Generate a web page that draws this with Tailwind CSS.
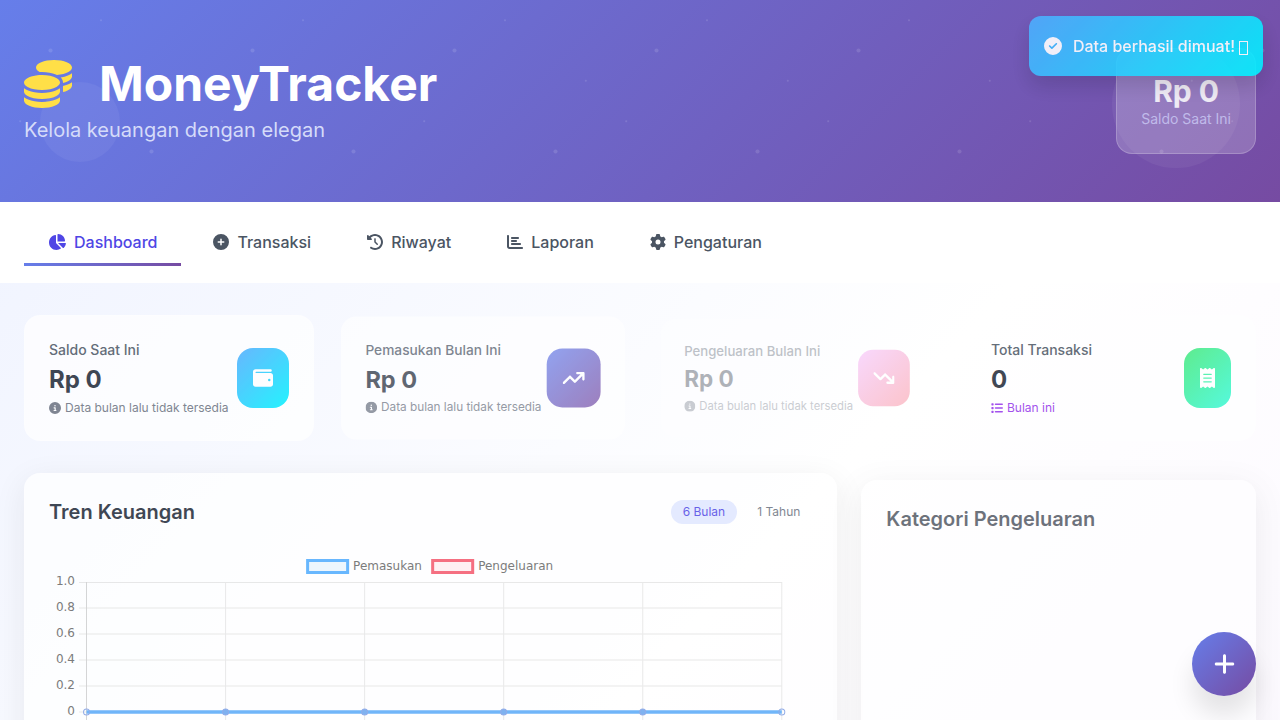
<!DOCTYPE html>
<html lang="id">
<head>
<meta charset="utf-8">
<meta name="viewport" content="width=device-width, initial-scale=1">
<title>MoneyTracker</title>
<script src="https://cdn.jsdelivr.net/npm/@tailwindcss/browser@4"></script>
</head>
<body class="font-['Inter',sans-serif] text-[#1f2937]">
<svg class="hidden" aria-hidden="true">
  <symbol id="coins" viewBox="0 0 512 512"><path d="M512 80c0 18-14.3 34.6-38.4 48c-29.1 16.1-72.5 27.5-122.3 30.9c-3.7-1.8-7.4-3.5-11.3-5C300.6 137.4 248.2 128 192 128c-8.3 0-16.4 .2-24.5 .6l-1.1-.6C142.3 114.6 128 98 128 80c0-44.2 86-80 192-80S512 35.8 512 80zM160.7 161.1c10.2-.7 20.7-1.1 31.3-1.1c62.2 0 117.4 12.3 152.5 31.4C369.3 204.9 384 221.7 384 240c0 4-.7 7.9-2.1 11.7c-4.6 13.2-17 25.3-35 35.5c-.4 .3-.9 .5-1.3 .7c-35 19.4-90.8 32-153.6 32c-59.6 0-112.9-11.3-148.2-29.1c-1.9-.9-3.7-1.9-5.5-2.9C14.3 274.6 0 258 0 240c0-34.8 53.4-64.5 128-75.4c10.5-1.5 21.4-2.7 32.7-3.5zM416 240c0-21.9-10.6-39.9-24.1-53.4c28.3-4.4 54.2-11.4 76.2-20.5c16.3-6.8 31.5-15.2 43.9-25.5V176c0 19.3-16.5 37.1-43.8 50.9c-14.6 7.4-32.4 13.7-52.4 18.5c.1-1.8 .2-3.5 .2-5.3zm-32 96c0 18-14.3 34.6-38.4 48c-1.8 1-3.6 1.9-5.5 2.9C304.9 404.7 251.6 416 192 416c-62.8 0-118.6-12.6-153.6-32C14.3 370.6 0 354 0 336V300.6c12.5 10.3 27.6 18.7 43.9 25.5C83.4 342.6 135.8 352 192 352s108.6-9.4 148.1-25.9c7.8-3.2 15.3-6.9 22.4-10.9c6.1-3.4 11.8-7.2 17.2-11.2c1.5-1.1 2.9-2.3 4.3-3.4V336zm32 0V278.1c19-4.2 36.5-9.5 52.1-16c16.3-6.8 31.5-15.2 43.9-25.5V272c0 10.5-5 21-14.9 30.9c-16.3 16.3-45 29.7-81.3 38.4c.1-1.7 .2-3.5 .2-5.3zM192 448c56.2 0 108.6-9.4 148.1-25.9c16.3-6.8 31.5-15.2 43.9-25.5V432c0 44.2-86 80-192 80S0 476.2 0 432V396.6c12.5 10.3 27.6 18.7 43.9 25.5C83.4 438.6 135.8 448 192 448z"/></symbol>
  <symbol id="check" viewBox="0 0 512 512"><path d="M256 512A256 256 0 1 0 256 0a256 256 0 1 0 0 512zM369 209L241 337c-9.4 9.4-24.6 9.4-33.9 0l-64-64c-9.4-9.4-9.4-24.6 0-33.9s24.6-9.4 33.9 0l47 47L335 175c9.4-9.4 24.6-9.4 33.9 0s9.4 24.6 0 33.9z"/></symbol>
  <symbol id="pie" viewBox="0 0 576 512"><path d="M304 240V16.6c0-9 7-16.6 16-16.6C443.7 0 544 100.3 544 224c0 9-7.6 16-16.6 16H304zM32 272C32 150.7 122.1 50.3 239 34.3c9.2-1.3 17 6.1 17 15.4V288L412.5 444.5c6.7 6.7 6.2 17.7-1.5 23.1C371.8 495.6 323.8 512 272 512C139.5 512 32 404.6 32 272zm526.4 16c9.3 0 16.6 7.8 15.4 17c-7.7 55.9-34.6 105.6-73.9 142.3c-6 5.6-15.4 5.2-21.2-.7L320 288H558.4z"/></symbol>
  <symbol id="circle-plus" viewBox="0 0 512 512"><path d="M256 512A256 256 0 1 0 256 0a256 256 0 1 0 0 512zM232 344V280H168c-13.3 0-24-10.7-24-24s10.7-24 24-24h64V168c0-13.3 10.7-24 24-24s24 10.7 24 24v64h64c13.3 0 24 10.7 24 24s-10.7 24-24 24H280v64c0 13.3-10.7 24-24 24s-24-10.7-24-24z"/></symbol>
  <symbol id="history" viewBox="0 0 512 512"><path d="M75 75L41 41C25.9 25.9 0 36.6 0 57.9V168c0 13.3 10.7 24 24 24H134.1c21.4 0 32.1-25.9 17-41l-30.8-30.8C155 85.5 203 64 256 64c106 0 192 86 192 192s-86 192-192 192c-40.8 0-78.6-12.7-109.7-34.4c-14.5-10.1-34.4-6.6-44.6 7.9s-6.6 34.4 7.9 44.6C151.2 495 201.7 512 256 512c141.4 0 256-114.6 256-256S397.4 0 256 0C185.3 0 121.3 28.7 75 75zm181 53c-13.3 0-24 10.7-24 24V256c0 6.4 2.5 12.5 7 17l72 72c9.4 9.4 24.6 9.4 33.9 0s9.4-24.6 0-33.9l-65-65V152c0-13.3-10.7-24-24-24z"/></symbol>
  <symbol id="bars" viewBox="0 0 512 512"><path d="M32 32c17.7 0 32 14.3 32 32V400c0 8.8 7.2 16 16 16H480c17.7 0 32 14.3 32 32s-14.3 32-32 32H80c-44.2 0-80-35.8-80-80V64C0 46.3 14.3 32 32 32zm96 96c0-17.7 14.3-32 32-32l192 0c17.7 0 32 14.3 32 32s-14.3 32-32 32l-192 0c-17.7 0-32-14.3-32-32zm32 64H288c17.7 0 32 14.3 32 32s-14.3 32-32 32H160c-17.7 0-32-14.3-32-32s14.3-32 32-32zm0 96H416c17.7 0 32 14.3 32 32s-14.3 32-32 32H160c-17.7 0-32-14.3-32-32s14.3-32 32-32z"/></symbol>
  <symbol id="gear" viewBox="0 0 512 512"><path d="M495.9 166.6c3.2 8.7 .5 18.4-6.4 24.6l-43.3 39.4c1.1 8.3 1.7 16.8 1.7 25.4s-.6 17.1-1.7 25.4l43.3 39.4c6.9 6.2 9.6 15.9 6.4 24.6c-4.4 11.9-9.7 23.3-15.8 34.3l-4.7 8.1c-6.6 11-14 21.4-22.1 31.2c-5.9 7.2-15.7 9.6-24.5 6.8l-55.7-17.7c-13.4 10.3-28.2 18.9-44 25.4l-12.5 57.1c-2 9.1-9 16.3-18.2 17.8c-13.8 2.3-28 3.5-42.5 3.5s-28.7-1.2-42.5-3.5c-9.2-1.5-16.2-8.7-18.2-17.8l-12.5-57.1c-15.8-6.5-30.6-15.1-44-25.4L83.1 425.9c-8.8 2.8-18.6 .3-24.5-6.8c-8.1-9.8-15.5-20.2-22.1-31.2l-4.7-8.1c-6.1-11-11.4-22.4-15.8-34.3c-3.2-8.7-.5-18.4 6.4-24.6l43.3-39.4C64.6 273.1 64 264.6 64 256s.6-17.1 1.7-25.4L22.4 191.2c-6.9-6.2-9.6-15.9-6.4-24.6c4.4-11.9 9.7-23.3 15.8-34.3l4.7-8.1c6.6-11 14-21.4 22.1-31.2c5.9-7.2 15.7-9.6 24.5-6.8l55.7 17.7c13.4-10.3 28.2-18.9 44-25.4l12.5-57.1c2-9.1 9-16.3 18.2-17.8C227.3 1.2 241.5 0 256 0s28.7 1.2 42.5 3.5c9.2 1.5 16.2 8.7 18.2 17.8l12.5 57.1c15.8 6.5 30.6 15.1 44 25.4l55.7-17.7c8.8-2.8 18.6-.3 24.5 6.8c8.1 9.8 15.5 20.2 22.1 31.2l4.7 8.1c6.1 11 11.4 22.4 15.8 34.3zM256 336a80 80 0 1 0 0-160 80 80 0 1 0 0 160z"/></symbol>
  <symbol id="info" viewBox="0 0 512 512"><path d="M256 512A256 256 0 1 0 256 0a256 256 0 1 0 0 512zM216 336h24V272H216c-13.3 0-24-10.7-24-24s10.7-24 24-24h48c13.3 0 24 10.7 24 24v88h8c13.3 0 24 10.7 24 24s-10.7 24-24 24H216c-13.3 0-24-10.7-24-24s10.7-24 24-24zm40-208a32 32 0 1 1 0 64 32 32 0 1 1 0-64z"/></symbol>
  <symbol id="wallet" viewBox="0 0 512 512"><path d="M64 32C28.7 32 0 60.7 0 96V416c0 35.3 28.7 64 64 64H448c35.3 0 64-28.7 64-64V192c0-35.3-28.7-64-64-64H80c-8.8 0-16-7.2-16-16s7.2-16 16-16H448c17.7 0 32-14.3 32-32s-14.3-32-32-32H64zM416 272a32 32 0 1 1 0 64 32 32 0 1 1 0-64z"/></symbol>
  <symbol id="trend-up" viewBox="0 0 576 512"><path d="M384 160c-17.7 0-32-14.3-32-32s14.3-32 32-32H544c17.7 0 32 14.3 32 32V288c0 17.7-14.3 32-32 32s-32-14.3-32-32V205.3L342.6 374.6c-12.5 12.5-32.8 12.5-45.3 0L192 269.3 54.6 406.6c-12.5 12.5-32.8 12.5-45.3 0s-12.5-32.8 0-45.3l160-160c12.5-12.5 32.8-12.5 45.3 0L320 306.7 466.7 160H384z"/></symbol>
  <symbol id="trend-down" viewBox="0 0 576 512"><path d="M384 352c-17.7 0-32 14.3-32 32s14.3 32 32 32H544c17.7 0 32-14.3 32-32V224c0-17.7-14.3-32-32-32s-32 14.3-32 32v82.7L342.6 137.4c-12.5-12.5-32.8-12.5-45.3 0L192 242.7 54.6 105.4c-12.5-12.5-32.8-12.5-45.3 0s-12.5 32.8 0 45.3l160 160c12.5 12.5 32.8 12.5 45.3 0L320 205.3 466.7 352H384z"/></symbol>
  <symbol id="receipt" viewBox="0 0 384 512"><path d="M14 2.2C22.5-1.7 32.5-.3 39.6 5.8L80 40.4 120.4 5.8c9-7.7 22.3-7.7 31.2 0L192 40.4 232.4 5.8c9-7.7 22.3-7.7 31.2 0L304 40.4 344.4 5.8c7.1-6.1 17.1-7.5 25.6-3.6s14 12.4 14 21.8V488c0 9.4-5.5 17.9-14 21.8s-18.5 2.5-25.6-3.6L304 471.6l-40.4 34.6c-9 7.7-22.3 7.7-31.2 0L192 471.6l-40.4 34.6c-9 7.7-22.3 7.7-31.2 0L80 471.6 39.6 506.2c-7.1 6.1-17.1 7.5-25.6 3.6S0 497.4 0 488V24C0 14.6 5.5 6.1 14 2.2zM96 144c-8.8 0-16 7.2-16 16s7.2 16 16 16H288c8.8 0 16-7.2 16-16s-7.2-16-16-16H96zM80 352c0 8.8 7.2 16 16 16H288c8.8 0 16-7.2 16-16s-7.2-16-16-16H96c-8.8 0-16 7.2-16 16zM96 240c-8.8 0-16 7.2-16 16s7.2 16 16 16H288c8.8 0 16-7.2 16-16s-7.2-16-16-16H96z"/></symbol>
  <symbol id="list" viewBox="0 0 512 512"><path d="M40 48C26.7 48 16 58.7 16 72v48c0 13.3 10.7 24 24 24H88c13.3 0 24-10.7 24-24V72c0-13.3-10.7-24-24-24H40zM192 64c-17.7 0-32 14.3-32 32s14.3 32 32 32H480c17.7 0 32-14.3 32-32s-14.3-32-32-32H192zm0 160c-17.7 0-32 14.3-32 32s14.3 32 32 32H480c17.7 0 32-14.3 32-32s-14.3-32-32-32H192zm0 160c-17.7 0-32 14.3-32 32s14.3 32 32 32H480c17.7 0 32-14.3 32-32s-14.3-32-32-32H192zM16 232v48c0 13.3 10.7 24 24 24H88c13.3 0 24-10.7 24-24V232c0-13.3-10.7-24-24-24H40c-13.3 0-24 10.7-24 24zM40 368c-13.3 0-24 10.7-24 24v48c0 13.3 10.7 24 24 24H88c13.3 0 24-10.7 24-24V392c0-13.3-10.7-24-24-24H40z"/></symbol>
  <symbol id="plus" viewBox="0 0 448 512"><path d="M256 80c0-17.7-14.3-32-32-32s-32 14.3-32 32V224H48c-17.7 0-32 14.3-32 32s14.3 32 32 32H192V432c0 17.7 14.3 32 32 32s32-14.3 32-32V288H400c17.7 0 32-14.3 32-32s-14.3-32-32-32H256V80z"/></symbol>
</svg>

<div class="min-h-screen bg-[linear-gradient(to_bottom_right,#eef2ff,#ffffff,#faf5ff)] bg-[length:100%_1366px]">
  <header class="relative overflow-hidden bg-[linear-gradient(135deg,#667eea_0%,#764ba2_100%)] px-6 py-12 text-white">
    <svg class="absolute inset-0 h-full w-full" aria-hidden="true">
      <defs>
        <pattern id="dots" width="202" height="202" patternUnits="userSpaceOnUse">
          <g transform="scale(2.02)" fill="#fff" fill-opacity="0.12">
            <circle cx="25" cy="25" r="1"/><circle cx="75" cy="75" r="1"/>
            <circle cx="50" cy="10" r=".5"/><circle cx="10" cy="60" r=".5"/><circle cx="90" cy="40" r=".5"/>
          </g>
        </pattern>
      </defs>
      <rect width="100%" height="100%" fill="url(#dots)"/>
    </svg>
    <div class="absolute top-10 right-10 size-32 rounded-full bg-white/5"></div>
    <div class="absolute bottom-10 left-10 size-20 rounded-full bg-white/5"></div>
    <div class="relative flex items-center justify-between">
      <div class="pt-px">
        <h1 class="mb-2 flex items-center gap-[27px] text-5xl leading-none font-bold">
          <svg class="size-12 fill-[#ffdf47]" aria-hidden="true"><use href="#coins"/></svg>MoneyTracker
        </h1>
        <p class="text-xl leading-7 text-[#d5dbf9]">Kelola keuangan dengan elegan</p>
      </div>
      <div class="rounded-2xl border border-white/20 bg-white/20 p-6 text-center">
        <p class="text-3xl leading-9 font-bold text-white/85">Rp 0</p>
        <p class="text-sm leading-5 text-[#c0baea]">Saldo Saat Ini</p>
      </div>
    </div>
  </header>

  <nav class="border-b border-white bg-white px-6 py-4">
    <div class="flex gap-2 font-medium text-[#4b5563]">
      <button type="button" class="relative flex h-12 items-center gap-2 px-6 text-[#4f46e5]"><svg class="h-4 w-[18px] fill-current" aria-hidden="true"><use href="#pie"/></svg>Dashboard<span class="absolute inset-x-0 bottom-0 h-[3px] bg-[linear-gradient(90deg,#667eea,#764ba2)]"></span></button>
      <button type="button" class="flex h-12 items-center gap-2 px-6"><svg class="size-4 fill-current" aria-hidden="true"><use href="#circle-plus"/></svg>Transaksi</button>
      <button type="button" class="flex h-12 items-center gap-2 px-6"><svg class="size-4 fill-current" aria-hidden="true"><use href="#history"/></svg>Riwayat</button>
      <button type="button" class="flex h-12 items-center gap-2 px-6"><svg class="size-4 fill-current" aria-hidden="true"><use href="#bars"/></svg>Laporan</button>
      <button type="button" class="flex h-12 items-center gap-2 px-6"><svg class="size-4 fill-current" aria-hidden="true"><use href="#gear"/></svg>Pengaturan</button>
    </div>
  </nav>

  <main class="px-6 py-8">
    <section class="mb-8 grid grid-cols-4 gap-6">
      <div class="flex items-center justify-between rounded-2xl border border-white/20 bg-white/90 p-6 opacity-85">
        <div class="flex flex-col gap-1">
          <p class="text-sm leading-5 font-medium text-[#4b5563]">Saldo Saat Ini</p>
          <p class="text-2xl leading-8 font-bold">Rp 0</p>
          <p class="flex items-center gap-1 text-xs leading-4 whitespace-nowrap text-[#6b7280]"><svg class="size-3 fill-current" aria-hidden="true"><use href="#info"/></svg>Data bulan lalu tidak tersedia</p>
        </div>
        <div class="rounded-2xl bg-[linear-gradient(135deg,#4facfe,#00f2fe)] px-4 py-5"><svg class="size-5 fill-white" aria-hidden="true"><use href="#wallet"/></svg></div>
      </div>
      <div class="flex scale-98 items-center justify-between rounded-2xl border border-white/20 bg-white/90 p-6 opacity-70">
        <div class="flex flex-col gap-1">
          <p class="text-sm leading-5 font-medium text-[#4b5563]">Pemasukan Bulan Ini</p>
          <p class="text-2xl leading-8 font-bold">Rp 0</p>
          <p class="flex items-center gap-1 text-xs leading-4 whitespace-nowrap text-[#6b7280]"><svg class="size-3 fill-current" aria-hidden="true"><use href="#info"/></svg>Data bulan lalu tidak tersedia</p>
        </div>
        <div class="rounded-2xl bg-[linear-gradient(135deg,#667eea,#764ba2)] px-4 py-5"><svg class="h-5 w-[23px] fill-white" aria-hidden="true"><use href="#trend-up"/></svg></div>
      </div>
      <div class="flex scale-94 items-center justify-between rounded-2xl border border-white/20 bg-white/90 p-6 opacity-35">
        <div class="flex flex-col gap-1">
          <p class="text-sm leading-5 font-medium text-[#4b5563]">Pengeluaran Bulan Ini</p>
          <p class="text-2xl leading-8 font-bold">Rp 0</p>
          <p class="flex items-center gap-1 text-xs leading-4 whitespace-nowrap text-[#6b7280]"><svg class="size-3 fill-current" aria-hidden="true"><use href="#info"/></svg>Data bulan lalu tidak tersedia</p>
        </div>
        <div class="rounded-2xl bg-[linear-gradient(135deg,#f093fb,#f5576c)] px-4 py-5"><svg class="h-5 w-[23px] fill-white" aria-hidden="true"><use href="#trend-down"/></svg></div>
      </div>
      <div class="flex items-center justify-between rounded-2xl border border-white/20 bg-white/90 p-6 opacity-85">
        <div class="flex flex-col gap-1">
          <p class="text-sm leading-5 font-medium text-[#4b5563]">Total Transaksi</p>
          <p class="text-2xl leading-8 font-bold">0</p>
          <p class="flex items-center gap-1 text-xs leading-4 text-[#9333ea]"><svg class="size-3 fill-current" aria-hidden="true"><use href="#list"/></svg>Bulan ini</p>
        </div>
        <div class="rounded-2xl bg-[linear-gradient(135deg,#43e97b,#38f9d7)] px-4 py-5"><svg class="h-5 w-[15px] fill-white" aria-hidden="true"><use href="#receipt"/></svg></div>
      </div>
    </section>

    <section class="grid grid-cols-3 items-start gap-6">
      <div class="col-span-2 rounded-2xl border border-white/20 bg-white/90 p-6 opacity-85 shadow-[0_8px_32px_rgba(0,0,0,0.08)]">
        <div class="mb-6 flex items-center justify-between">
          <h2 class="text-xl leading-7 font-semibold">Tren Keuangan</h2>
          <div class="flex gap-2 text-xs leading-4">
            <button type="button" class="rounded-full bg-[#e0e7ff] px-3 py-1 text-[#4f46e5]">6 Bulan</button>
            <button type="button" class="rounded-full px-3 py-1 text-[#6b7280]">1 Tahun</button>
          </div>
        </div>
        <svg class="w-full font-['DejaVu_Sans',sans-serif] text-xs" viewBox="0 0 763 320" role="img" aria-label="Tren pemasukan dan pengeluaran">
          <g stroke-width="3">
            <rect x="258.500" y="10.500" width="40" height="12" fill="#36a2eb" fill-opacity=".1" stroke="#4facfe"/>
            <rect x="383.500" y="10.500" width="40" height="12" fill="#ff6384" fill-opacity=".1" stroke="#f5576c"/>
          </g>
          <g fill="#666">
            <text x="304" y="20">Pemasukan</text><text x="429" y="20">Pengeluaran</text>
          </g>
          <g fill="#666" text-anchor="end">
            <text x="26" y="35">1.0</text><text x="26" y="61">0.8</text><text x="26" y="87">0.6</text><text x="26" y="113">0.4</text><text x="26" y="139">0.2</text><text x="26" y="165">0</text>
          </g>
          <path fill="none" stroke="#000" stroke-opacity=".1" d="M30 32.500H732M30 58H732M30 84H732M30 110H732M30 136H732M30 162H732M30 188H732M30 214H732M30 240H732M30 266H732M30 292H732M37.500 32V298M176.500 32V298M315.500 32V298M454.500 32V298M593.500 32V298M732.500 32V298"/>
          <path stroke="#000" stroke-opacity=".1" d="M37.500 32V298"/>
          <path stroke="#58a9f8" stroke-width="3.500" d="M37.500 162H732.500"/>
          <g fill="#6aa5ee" stroke="#7f9ee4"><circle cx="176.500" cy="162" r="3"/><circle cx="315.500" cy="162" r="3"/><circle cx="454.500" cy="162" r="3"/><circle cx="593.500" cy="162" r="3"/></g>
          <g fill="none" stroke="#7f9ee4"><circle cx="37.500" cy="162" r="3"/><circle cx="732.500" cy="162" r="3"/></g>
        </svg>
      </div>
      <div class="mt-[7px] min-h-[400px] rounded-2xl border border-white/20 bg-white/90 p-6 opacity-65 shadow-[0_8px_32px_rgba(0,0,0,0.1)]">
        <h2 class="text-xl leading-7 font-semibold">Kategori Pengeluaran</h2>
      </div>
    </section>
  </main>
</div>

<button type="button" aria-label="Tambah transaksi" class="fixed right-6 bottom-6 flex size-16 items-center justify-center rounded-full bg-[linear-gradient(135deg,#667eea,#764ba2)] shadow-[0_20px_25px_rgba(0,0,0,0.1)]"><svg class="h-6 w-[21px] fill-white" aria-hidden="true"><use href="#plus"/></svg></button>

<div role="status" class="fixed top-4 right-[17px] flex h-[60px] items-center gap-[11px] rounded-xl bg-[linear-gradient(135deg,#4facfe,#00f2fe)] px-[15px] font-medium text-white opacity-90 shadow-[0_10px_20px_rgba(0,0,0,0.15)]">
  <svg class="size-[18px] fill-current" aria-hidden="true"><use href="#check"/></svg>
  <span class="flex items-center gap-1">Data berhasil dimuat!<span class="mt-1 h-[14px] w-[9px] border border-white" aria-hidden="true"></span></span>
</div>
</body>
</html>
